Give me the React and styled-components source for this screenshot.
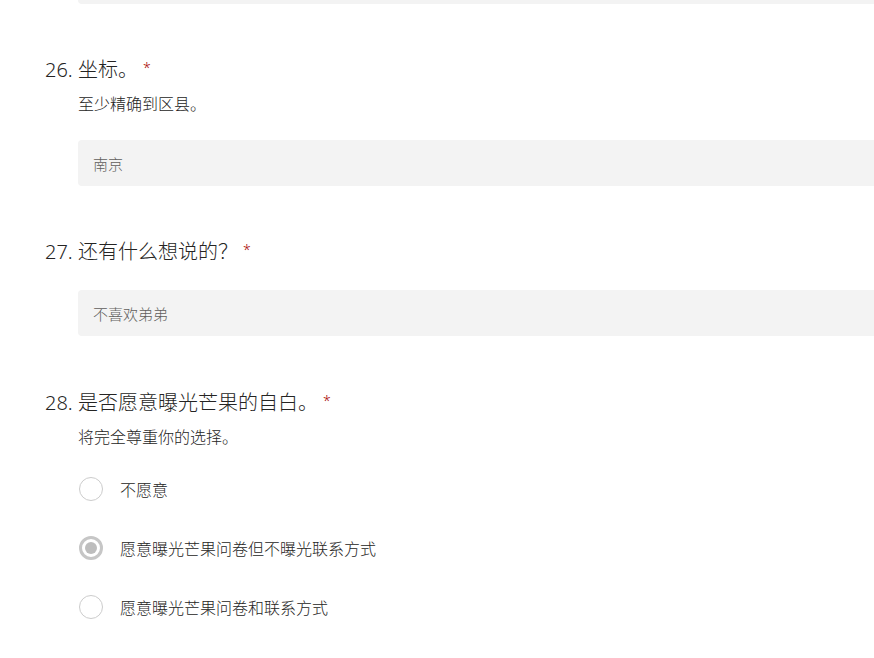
import React from "react";
import styled, { createGlobalStyle } from "styled-components";

const GlobalStyle = createGlobalStyle`
  html, body {
    margin: 0;
    padding: 0;
    background: #ffffff;
    overflow: hidden;
  }
  body {
    font-family: "Noto Sans", "Noto Sans CJK SC", sans-serif;
    color: #333333;
  }
`;

const Page = styled.div`
  width: 874px;
  height: 658px;
  overflow: hidden;
`;

const Scroller = styled.div`
  margin-top: -42px;
  padding-left: 45px;
`;

const Question = styled.section`
  display: grid;
  grid-template-columns: 33px 1fr;
  padding-top: ${(p) => p.$pt ?? 52}px;
`;

const QNumber = styled.div`
  font-size: 20px;
  line-height: 28px;
  height: 28px;
  font-weight: 300;
  color: #252423;
`;

const QMain = styled.div`
  display: flex;
  flex-direction: column;
  min-width: 0;
`;

const Title = styled.div`
  font-size: 20px;
  line-height: 28px;
  height: 28px;
  font-weight: 300;
  color: #252423;
  white-space: nowrap;
`;

const Required = styled.span`
  color: #a80000;
  font-size: 14px;
  margin-left: 5px;
  vertical-align: top;
  line-height: 24px;
`;

const Description = styled.div`
  font-size: 16px;
  line-height: 20px;
  margin-top: 10px;
  font-weight: 300;
  color: #252423;
  white-space: nowrap;
`;

const TextBox = styled.div`
  box-sizing: border-box;
  width: 820px;
  height: 46px;
  margin-top: ${(p) => p.$mt ?? 24}px;
  background: #f3f3f3;
  border-radius: 4px;
  display: flex;
  align-items: center;
  padding-left: 15px;
  font-size: 15px;
  font-weight: 300;
  color: #605e5c;
  white-space: nowrap;
`;

const RadioGroup = styled.div`
  display: flex;
  flex-direction: column;
  gap: 35px;
  margin-top: 30px;
`;

const Option = styled.label`
  display: flex;
  align-items: center;
  gap: 17px;
  height: 24px;
  font-size: 16px;
  font-weight: 300;
  color: #252423;
  white-space: nowrap;
`;

const RadioCircle = styled.span`
  box-sizing: border-box;
  width: 24px;
  height: 24px;
  margin-left: 1px;
  border-radius: 50%;
  border: ${(p) => (p.$checked ? "3px solid #c6c6c6" : "1px solid #cccccc")};
  background: #ffffff;
  display: flex;
  align-items: center;
  justify-content: center;
  flex-shrink: 0;
  &::after {
    content: "";
    display: ${(p) => (p.$checked ? "block" : "none")};
    width: 12px;
    height: 12px;
    border-radius: 50%;
    background: #bdbdbd;
  }
`;

const Spacer = styled.div``;

const options = [
  { label: "不愿意", checked: false },
  { label: "愿意曝光芒果问卷但不曝光联系方式", checked: true },
  { label: "愿意曝光芒果问卷和联系方式", checked: false },
];

export default function App() {
  return (
    <Page>
      <GlobalStyle />
      <Scroller>
        <Question $pt={0}>
          <Spacer />
          <TextBox $mt={0} />
        </Question>

        <Question>
          <QNumber>26.</QNumber>
          <QMain>
            <Title>
              坐标。<Required>*</Required>
            </Title>
            <Description>至少精确到区县。</Description>
            <TextBox $mt={26}>南京</TextBox>
          </QMain>
        </Question>

        <Question>
          <QNumber>27.</QNumber>
          <QMain>
            <Title>
              还有什么想说的？<Required>*</Required>
            </Title>
            <TextBox>不喜欢弟弟</TextBox>
          </QMain>
        </Question>

        <Question $pt={53}>
          <QNumber>28.</QNumber>
          <QMain>
            <Title>
              是否愿意曝光芒果的自白。<Required>*</Required>
            </Title>
            <Description>将完全尊重你的选择。</Description>
            <RadioGroup>
              {options.map((o) => (
                <Option key={o.label}>
                  <RadioCircle $checked={o.checked} />
                  {o.label}
                </Option>
              ))}
            </RadioGroup>
          </QMain>
        </Question>
      </Scroller>
    </Page>
  );
}
